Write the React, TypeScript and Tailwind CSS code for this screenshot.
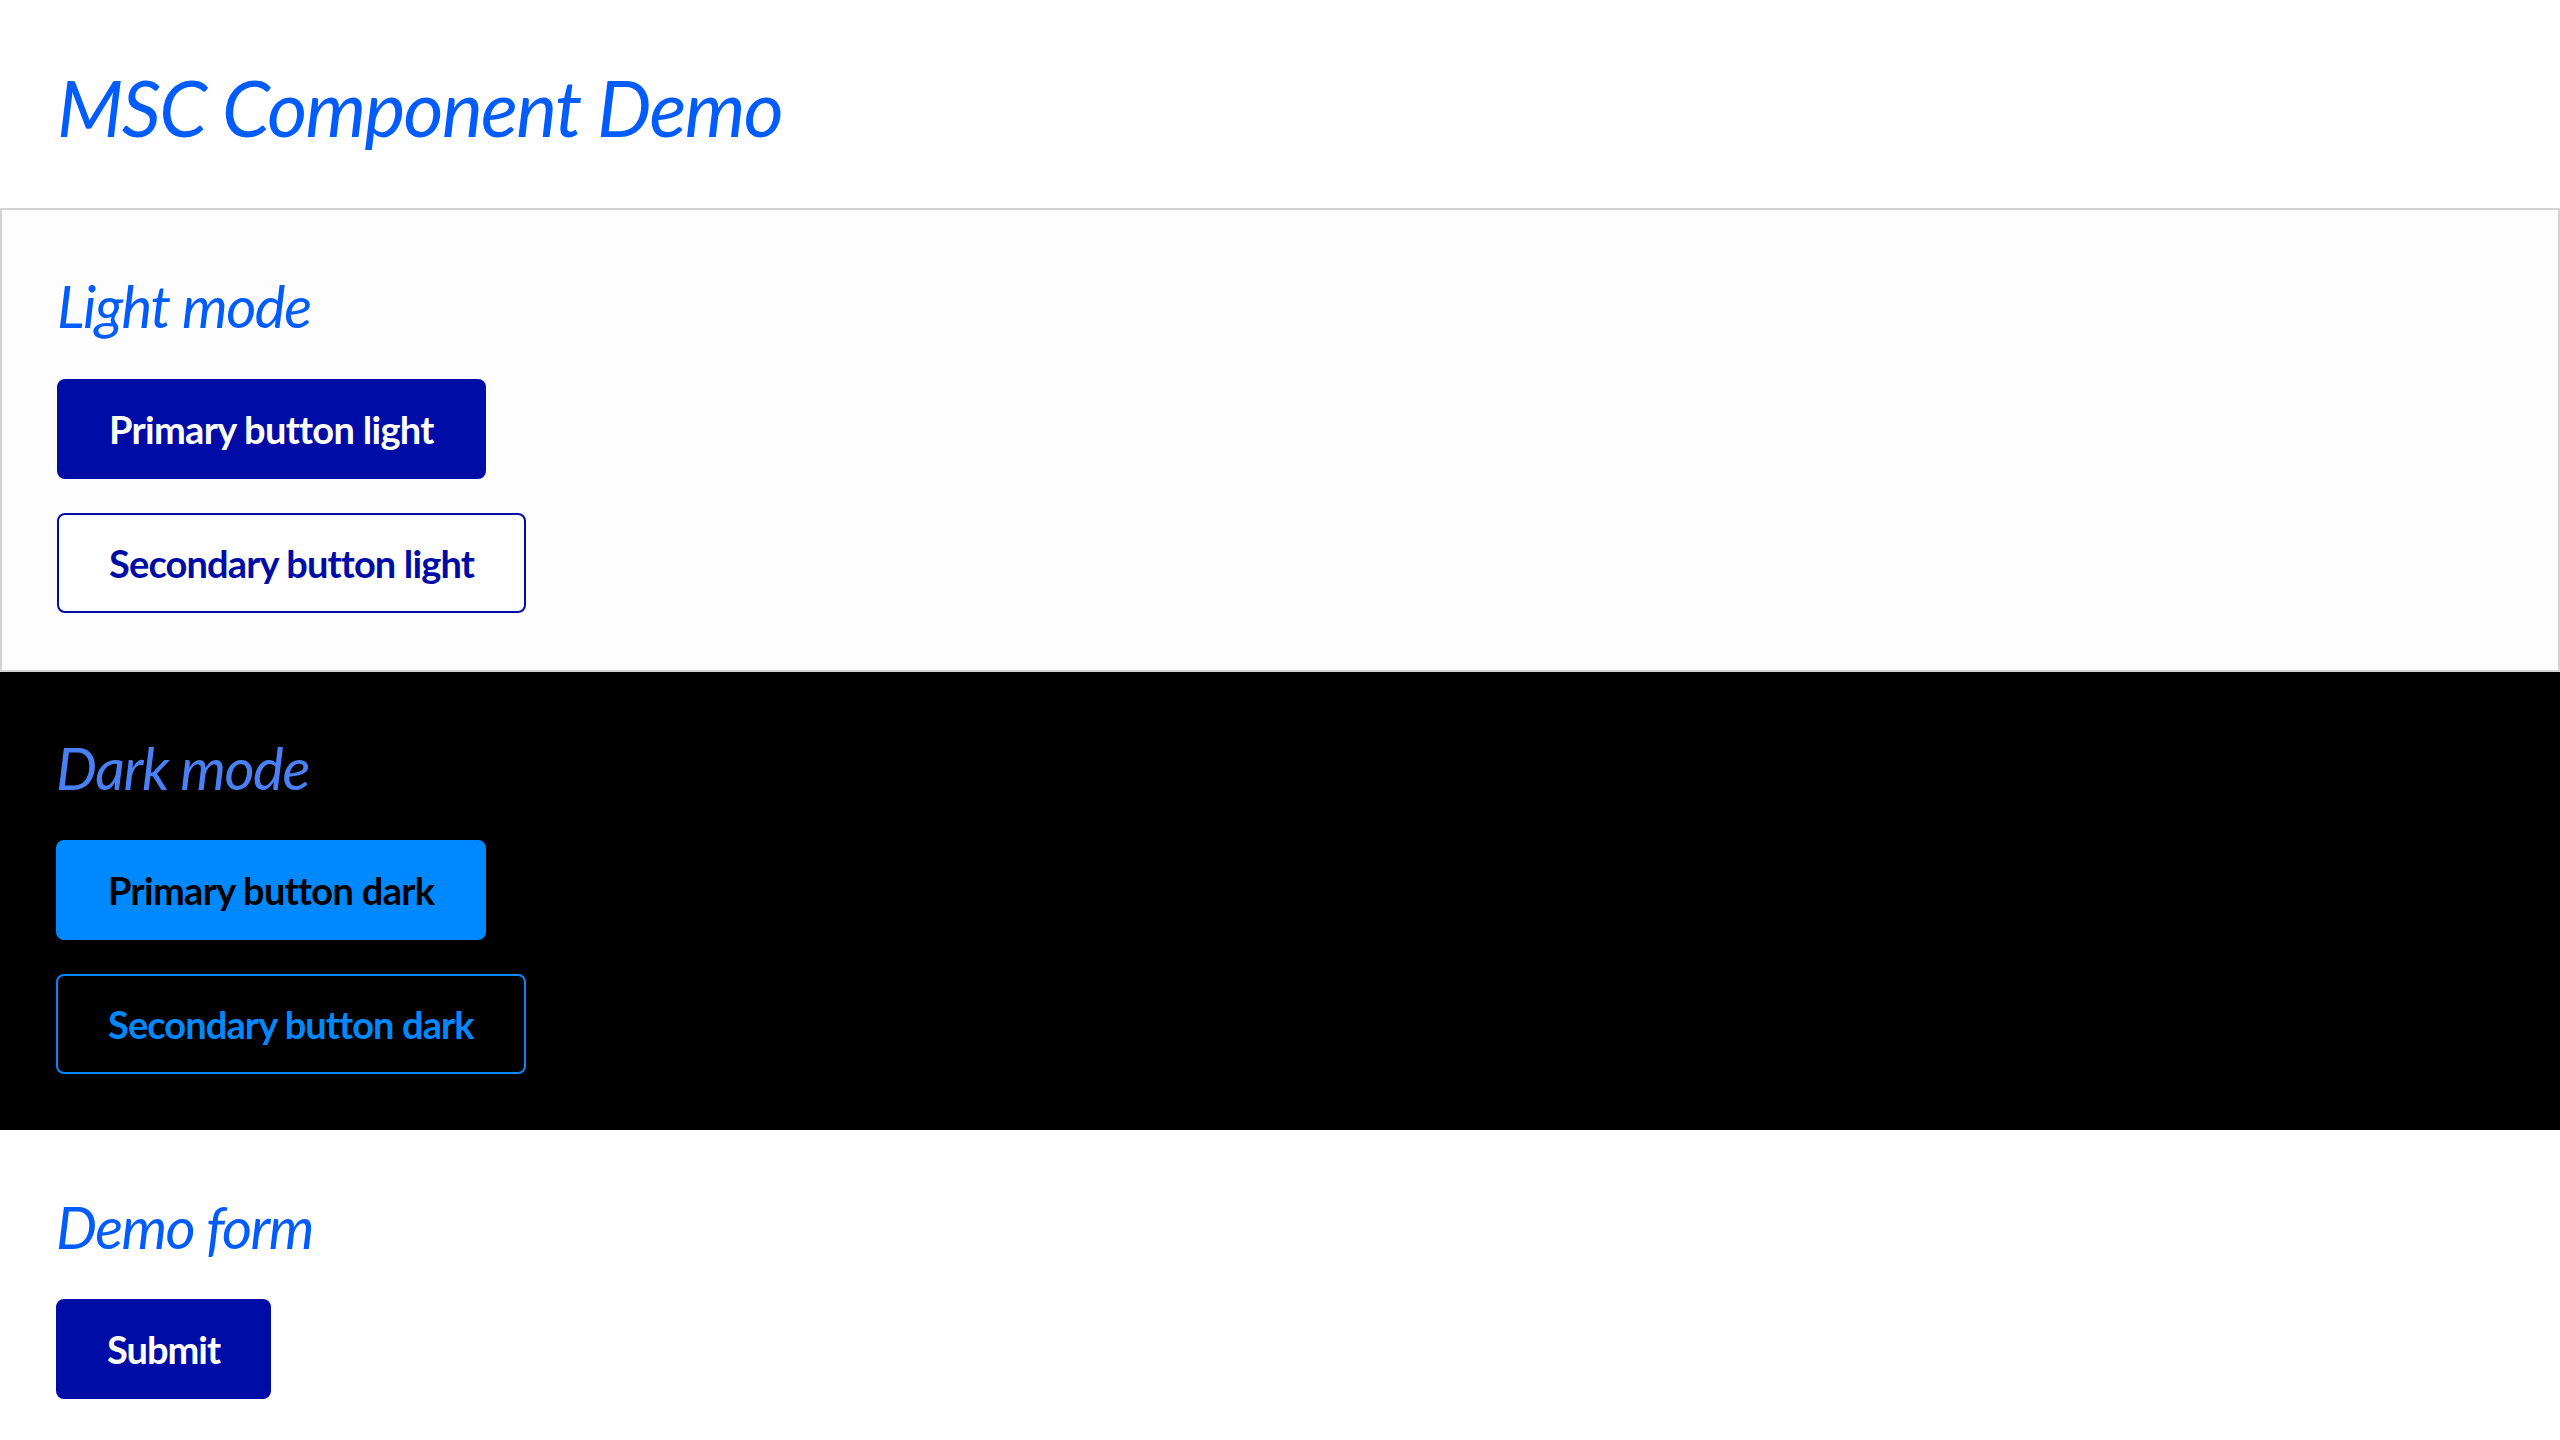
import React from 'react';

type Variant = 'primaryLight' | 'secondaryLight' | 'primaryDark' | 'secondaryDark';

const variantClasses: Record<Variant, string> = {
  primaryLight: 'bg-[#000ca6] text-white border-2 border-[#000ca6] tracking-[-0.7px]',
  secondaryLight: 'bg-white text-[#000ca6] border-2 border-[#000ca6] tracking-[-0.85px]',
  primaryDark: 'bg-[#0088ff] text-black border-2 border-[#0088ff] tracking-[-0.7px]',
  secondaryDark: 'bg-black text-[#0088ff] border-2 border-[#0088ff] tracking-[-0.9px]',
};

function DemoButton({ variant, children, className = '' }: { variant: Variant; children: React.ReactNode; className?: string }) {
  return (
    <button
      type="button"
      className={`flex h-[100px] items-center justify-center rounded-[8px] text-[38px] font-bold leading-none ${variantClasses[variant]} ${className}`}
    >
      {children}
    </button>
  );
}

export default function App() {
  return (
    <div className="min-h-screen bg-white" style={{ fontFamily: 'Lato, "Open Sans", sans-serif' }}>
      {/* Page title */}
      <header className="h-[208px] px-[57px] pt-[61px]">
        <h1 className="text-[77px] font-normal italic leading-[1.2] tracking-[-1.65px] text-[#005cff]">MSC Component Demo</h1>
      </header>

      {/* Light mode */}
      <section className="border-2 border-[#d3d3d3] bg-[#fdfdfd] px-[55px] pt-[61px] pb-[57px]">
        <h2 className="text-[58px] font-normal italic leading-[1.2] tracking-[-1.4px] text-[#005cff]">Light mode</h2>
        <div className="mt-[38px] flex flex-col items-start gap-[34px]">
          <DemoButton variant="primaryLight" className="px-[50px]">Primary button light</DemoButton>
          <DemoButton variant="secondaryLight" className="px-[50px]">Secondary button light</DemoButton>
        </div>
      </section>

      {/* Dark mode */}
      <section className="bg-black px-[56px] pt-[61px] pb-[56px]">
        <h2 className="text-[58px] font-normal italic leading-[1.2] tracking-[-1.4px] text-[#4a80f5]">Dark mode</h2>
        <div className="mt-[38px] flex flex-col items-start gap-[34px]">
          <DemoButton variant="primaryDark" className="px-[50px]">Primary button dark</DemoButton>
          <DemoButton variant="secondaryDark" className="px-[50px]">Secondary button dark</DemoButton>
        </div>
      </section>

      {/* Demo form */}
      <section className="px-[56px] pt-[62px] pb-[38px]">
        <h2 className="text-[58px] font-normal italic leading-[1.2] tracking-[-1.6px] text-[#005cff]">Demo form</h2>
        <form className="mt-[37px] flex flex-col items-start" onSubmit={(e) => e.preventDefault()}>
          <DemoButton variant="primaryLight" className="px-[49px] tracking-[-1px]">Submit</DemoButton>
        </form>
      </section>
    </div>
  );
}
